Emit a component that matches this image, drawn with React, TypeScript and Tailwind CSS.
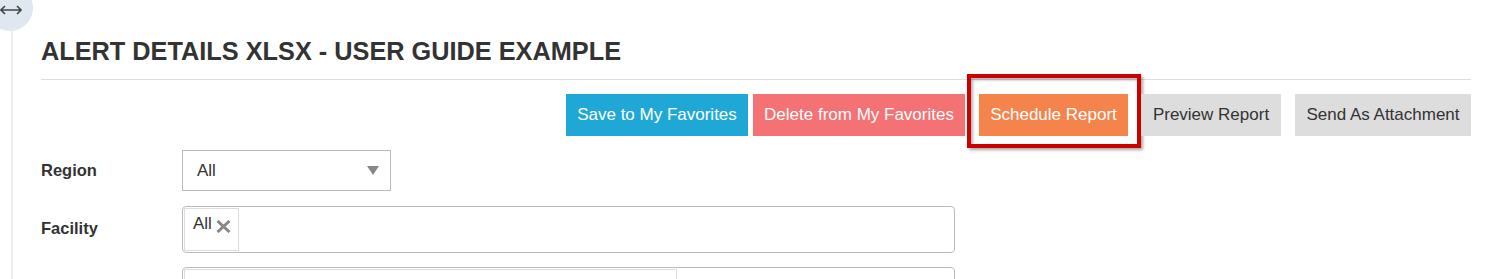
const font = { fontFamily: '"Liberation Sans", Arial, sans-serif' };

export default function App() {
    return (
        <div className="relative w-[1488px] h-[279px] overflow-hidden bg-white text-[#333]" style={font}>
            {/* sidebar toggle */}
            <div className="absolute left-[-13px] top-[-15px] w-[46px] h-[46px] rounded-full bg-[#dfe7f0]" />
            <svg className="absolute left-0 top-[5px]" width="22" height="10" viewBox="0 0 22 10" fill="none" stroke="#444" strokeWidth="1.6">
                <path d="M1 5h20M5 1L1 5l4 4M17 1l4 4-4 4" />
            </svg>
            <div className="absolute left-[11px] top-[31px] w-[2px] h-[260px] bg-[#eeeeee]" />

            <div className="ml-[41px] mr-[17px] pt-[36px]">
                <h1 className="text-[25.3px] font-bold leading-[30px]">ALERT DETAILS XLSX - USER GUIDE EXAMPLE</h1>
                <div className="mt-[13px] h-px bg-[#dddddd]" />

                <div className="flex justify-end items-start mt-[14px] h-[42px] text-[17px]">
                    <button className="h-[42px] w-[182px] bg-[#1fa8d6] text-white">Save to My Favorites</button>
                    <button className="h-[42px] w-[212px] ml-[5px] bg-[#f47174] text-white">Delete from My Favorites</button>
                    <div className="ml-[2px] mt-[-20px] pt-[16px] pb-[8px] pl-[8px] pr-[9px] border-[4px] border-[#cc0000] shadow-[inset_2px_2px_3px_rgba(0,0,0,0.3),2px_2px_3px_rgba(0,0,0,0.35)]">
                        <button className="block h-[42px] w-[149px] bg-[#f4844c] text-white">Schedule Report</button>
                    </div>
                    <button className="h-[42px] w-[140px] bg-[#dddddd] text-[#333]">Preview Report</button>
                    <button className="h-[42px] w-[176px] ml-[14px] bg-[#dddddd] text-[#333]">Send As Attachment</button>
                </div>

                <div className="mt-[14px] flex items-center">
                    <div className="w-[141px] text-[16.5px] font-bold">Region</div>
                    <div className="w-[209px] h-[41px] border border-[#bbbbbb] flex items-center justify-between pl-[14px] pr-[11px] text-[17px]">
                        <span>All</span>
                        <span className="w-0 h-0 border-l-[6px] border-r-[6px] border-t-[9px] border-l-transparent border-r-transparent border-t-[#888]" />
                    </div>
                </div>

                <div className="mt-[15px] flex items-center">
                    <div className="w-[141px] text-[16.5px] font-bold mt-[-3px]">Facility</div>
                    <div className="w-[773px] h-[47px] border border-[#bbbbbb] rounded-[4px] p-px">
                        <div className="w-[55px] h-full border border-[#dddddd] flex items-start pt-[6px] pl-[8px] text-[17px]">
                            <span className="leading-[18px]">All</span>
                            <svg className="ml-[4px] mt-[5px]" width="15" height="13" viewBox="0 0 15 13" stroke="#888" strokeWidth="3">
                                <path d="M1.5 1l12 11M13.5 1l-12 11" />
                            </svg>
                        </div>
                    </div>
                </div>

                <div className="mt-[14px] flex">
                    <div className="w-[141px]" />
                    <div className="w-[773px] h-[40px] border border-[#bbbbbb] rounded-[4px] p-px">
                        <div className="w-[493px] h-full border border-[#dddddd]" />
                    </div>
                </div>
            </div>
        </div>
    );
}
